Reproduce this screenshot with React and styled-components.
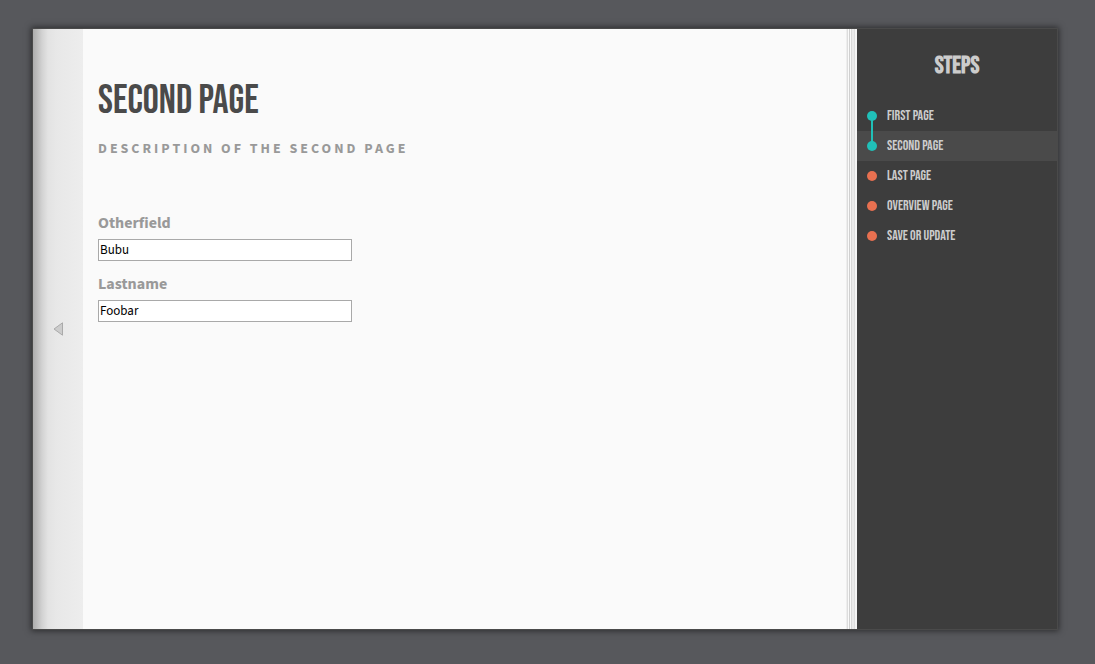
import React, { useState } from 'react';
import styled, { createGlobalStyle } from 'styled-components';

const display = '"Bebas Neue", "Liberation Sans Narrow", "Liberation Sans", sans-serif';
const body = '"Source Sans Pro", "Source Sans 3", "Noto Sans CJK SC", "Noto Sans", sans-serif';

const GlobalStyle = createGlobalStyle`
  *, *::before, *::after { box-sizing: border-box; }
  body {
    margin: 0;
    background: #57585c;
    font-family: ${body};
  }
`;

const Screen = styled.div`
  display: flex;
  min-height: 100vh;
  padding: 28px 37px 34px 32px;
`;

const Book = styled.div`
  flex: 1;
  display: flex;
  min-width: 0;
  border: 1px solid #4a4a4a;
  background: #fafafa;
  box-shadow: 0 0 6px 1px rgba(0, 0, 0, 0.5);
`;

const PreviousButton = styled.button`
  flex: 0 0 50px;
  display: flex;
  align-items: center;
  justify-content: center;
  padding: 0;
  border: 0;
  background: linear-gradient(to right, #adadad 0, #bcbcbc 4px, #d2d2d2 9px, #e3e3e3 15px, #e8e8e8 24px, #ededed 50px);
  cursor: pointer;
`;

const Content = styled.main`
  flex: 1;
  min-width: 0;
  padding: 48px 15px;
`;

const Title = styled.h1`
  margin: 0;
  font: normal 40px/48px ${display};
  color: #4a4a4a;
  text-transform: uppercase;
`;

const Description = styled.h2`
  margin: 12px 0 50px;
  font-size: 14px;
  line-height: 24px;
  font-weight: bold;
  letter-spacing: 3px;
  color: #999;
  text-transform: uppercase;
`;

const Form = styled.form`
  display: grid;
  gap: 11px;
  width: 254px;
  max-width: 100%;
`;

const Field = styled.div`
  display: flex;
  flex-direction: column;
  gap: 4px;
`;

const Label = styled.label`
  font-size: 16px;
  line-height: 24px;
  font-weight: bold;
  color: #999;
`;

const Input = styled.input`
  width: 100%;
  height: 22px;
  padding: 1px;
  border: 1px solid #a9a9a9;
  border-radius: 0;
  background: #fff;
  color: #000;
  font: 13px/18px ${body};
`;

const PageEdges = styled.div`
  flex: 0 0 11px;
  background: linear-gradient(
    to right,
    #eee 0 1px,
    #ddd 1px 2px,
    #fafafa 2px 3px,
    #d0d0d0 3px 4px,
    #f8f8f8 4px 5px,
    #d8d8d8 5px 6px,
    #eaeaea 6px 8px,
    #ddd 8px 9px,
    #f4f4f4 9px 11px
  );
`;

const Sidebar = styled.aside`
  flex: 0 0 200px;
  padding-top: 18px;
  background: #3d3d3d;
  color: #ccc;
`;

const SidebarTitle = styled.h2`
  margin: 0 0 16px;
  font: bold 24px/38px ${display};
  text-align: center;
  text-transform: uppercase;
`;

const StepList = styled.ol`
  margin: 0;
  padding: 0;
  list-style: none;
`;

const Step = styled.li`
  background: ${({ $current }) => ($current ? '#4a4a4a' : 'transparent')};
`;

const StepLink = styled.a`
  position: relative;
  display: flex;
  align-items: center;
  gap: 10px;
  height: 30px;
  padding: 0 10px;
  color: #ccc;
  font: 14px/30px ${display};
  text-decoration: none;
  text-transform: uppercase;

  &::before {
    content: '';
    flex: 0 0 10px;
    height: 10px;
    border-radius: 50%;
    background: ${({ $done }) => ($done ? '#20c0b8' : '#e87050')};
  }

  &::after {
    content: '';
    display: ${({ $linked }) => ($linked ? 'block' : 'none')};
    position: absolute;
    z-index: 1;
    top: 15px;
    left: 14px;
    width: 2px;
    height: 30px;
    background: #20c0b8;
  }
`;

const steps = ['First page', 'Second page', 'Last page', 'Overview page', 'Save or update'];
const current = 1;

export default function App() {
  const [values, setValues] = useState({ otherfield: 'Bubu', lastname: 'Foobar' });
  const update = (event) => setValues({ ...values, [event.target.name]: event.target.value });

  return (
    <>
      <GlobalStyle />
      <Screen>
        <Book>
          <PreviousButton type="button" aria-label="Previous page">
            <svg width="10" height="14" viewBox="0 0 10 14" aria-hidden="true">
              <path d="M9.5 .8V13.2L1 7Z" fill="#ccc" stroke="#aaa" />
            </svg>
          </PreviousButton>
          <Content>
            <Title>Second page</Title>
            <Description>Description of the second page</Description>
            <Form>
              <Field>
                <Label htmlFor="otherfield">Otherfield</Label>
                <Input id="otherfield" name="otherfield" value={values.otherfield} onChange={update} />
              </Field>
              <Field>
                <Label htmlFor="lastname">Lastname</Label>
                <Input id="lastname" name="lastname" value={values.lastname} onChange={update} />
              </Field>
            </Form>
          </Content>
          <PageEdges />
          <Sidebar>
            <SidebarTitle>Steps</SidebarTitle>
            <StepList>
              {steps.map((step, index) => (
                <Step key={step} $current={index === current}>
                  <StepLink
                    href={`#step-${index + 1}`}
                    aria-current={index === current ? 'step' : undefined}
                    $done={index <= current}
                    $linked={index < current}
                  >
                    {step}
                  </StepLink>
                </Step>
              ))}
            </StepList>
          </Sidebar>
        </Book>
      </Screen>
    </>
  );
}
